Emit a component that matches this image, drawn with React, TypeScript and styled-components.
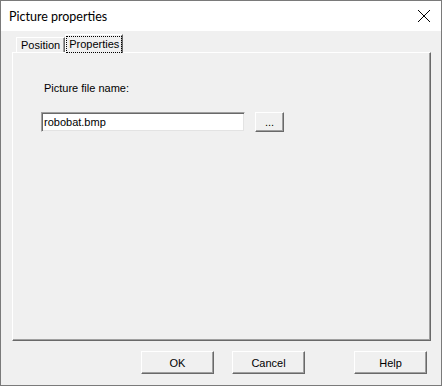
import styled, { createGlobalStyle } from "styled-components";

const GlobalStyle = createGlobalStyle`
  html, body {
    margin: 0;
    padding: 0;
    background: #f0f0f0;
  }
  * {
    box-sizing: border-box;
  }
`;

const Window = styled.div`
  display: flex;
  flex-direction: column;
  width: 442px;
  height: 386px;
  border: 1px solid #7a7a7a;
  background: #f0f0f0;
  font-family: "Liberation Sans", Arial, sans-serif;
  font-size: 11px;
  color: #000;
`;

const TitleBar = styled.div`
  display: flex;
  align-items: center;
  justify-content: space-between;
  height: 30px;
  flex-shrink: 0;
  background: #fff;
  padding: 0 7px 0 8px;
`;

const Title = styled.span`
  font-family: Lato, "Noto Sans", sans-serif;
  font-size: 12.5px;
  color: #000;
`;

const CloseButton = styled.div`
  display: flex;
  align-items: center;
  justify-content: center;
  width: 20px;
  height: 20px;
`;

const Body = styled.div`
  display: flex;
  flex-direction: column;
  padding: 3px 10px 0 11px;
`;

const TabStrip = styled.div`
  display: flex;
  align-items: flex-end;
  height: 18px;
  padding-left: 4px;
  position: relative;
  z-index: 1;
`;

const Tab = styled.div<{ $active?: boolean }>`
  display: flex;
  align-items: center;
  justify-content: center;
  height: ${(p) => (p.$active ? "19px" : "15px")};
  padding: 0 ${(p) => (p.$active ? "1px" : "2px")};
  margin-bottom: ${(p) => (p.$active ? "-1px" : "0")};
  background: #f0f0f0;
  border-top: 1px solid #fff;
  border-left: 1px solid #fff;
  border-right: 1px solid #696969;
  box-shadow: inset -1px 0 0 #a0a0a0;
`;

const TabLabel = styled.span<{ $focused?: boolean }>`
  display: inline-block;
  padding: 1px 2px 1px 2px;
  line-height: 13px;
  outline: ${(p) => (p.$focused ? "1px dotted #000" : "none")};
`;

const Panel = styled.div`
  display: flex;
  flex-direction: column;
  height: 289px;
  border-top: 1px solid #fff;
  border-left: 1px solid #fff;
  border-right: 1px solid #696969;
  border-bottom: 1px solid #696969;
  box-shadow: inset -1px -1px 0 #a0a0a0;
  padding: 28px 0 0 28px;
`;

const FieldLabel = styled.div`
  margin-left: 3px;
  height: 14px;
  line-height: 14px;
`;

const FieldRow = styled.div`
  display: flex;
  align-items: center;
  gap: 10px;
  margin-top: 17px;
`;

const TextInput = styled.div`
  display: flex;
  align-items: center;
  width: 204px;
  height: 20px;
  background: #fff;
  border-top: 1px solid #a0a0a0;
  border-left: 1px solid #a0a0a0;
  border-right: 1px solid #f0f0f0;
  border-bottom: 1px solid #f0f0f0;
  box-shadow: inset 1px 1px 0 #696969, inset -1px -1px 0 #e3e3e3;
  padding-left: 2px;
`;

const Button = styled.div<{ $width: number }>`
  display: flex;
  align-items: center;
  justify-content: center;
  width: ${(p) => p.$width}px;
  height: ${(p) => (p.$width < 40 ? 20 : 23)}px;
  background: #f0f0f0;
  border-top: 1px solid #fff;
  border-left: 1px solid #fff;
  border-right: 1px solid #696969;
  border-bottom: 1px solid #696969;
  box-shadow: inset -1px -1px 0 #a0a0a0;
`;

const Footer = styled.div`
  display: flex;
  margin-top: 10px;
  padding-left: 129px;
`;

const Spacer = styled.div<{ $w: number }>`
  width: ${(p) => p.$w}px;
`;

export default function App() {
  return (
    <>
      <GlobalStyle />
      <Window>
        <TitleBar>
          <Title>Picture properties</Title>
          <CloseButton>
            <svg width="14" height="14" viewBox="0 0 14 14">
              <path d="M1 1 L13 13 M13 1 L1 13" stroke="#000" strokeWidth="1" />
            </svg>
          </CloseButton>
        </TitleBar>
        <Body>
          <TabStrip>
            <Tab>
              <TabLabel>Position</TabLabel>
            </Tab>
            <Tab $active>
              <TabLabel $focused>Properties</TabLabel>
            </Tab>
          </TabStrip>
          <Panel>
            <FieldLabel>Picture file name:</FieldLabel>
            <FieldRow>
              <TextInput>robobat.bmp</TextInput>
              <Button $width={29}>...</Button>
            </FieldRow>
          </Panel>
          <Footer>
            <Button $width={73}>OK</Button>
            <Spacer $w={18} />
            <Button $width={73}>Cancel</Button>
            <Spacer $w={49} />
            <Button $width={73}>Help</Button>
          </Footer>
        </Body>
      </Window>
    </>
  );
}
